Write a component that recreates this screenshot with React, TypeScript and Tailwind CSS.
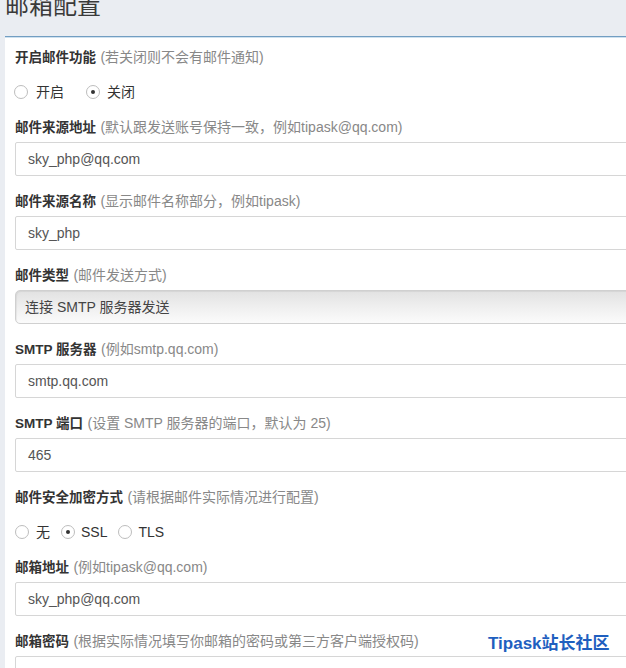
import React from "react";

const font = { fontFamily: '"Liberation Sans", "Noto Sans CJK SC", sans-serif' };

function Label({ title, hint }: { title: string; hint: string }) {
  return (
    <div className="h-[20px] leading-[20px] mb-[5px] whitespace-nowrap text-[#333]">
      <span className="font-bold text-[13.5px]">{title}</span>{" "}
      <span className="text-[14px] text-[#888]">{hint}</span>
    </div>
  );
}

function TextInput({ value }: { value: string }) {
  return (
    <div className="h-[34px] mb-[15px] border border-[#d6d6d6] rounded-[2px] bg-white px-[12px] flex items-center text-[14px] text-[#555]">
      {value}
    </div>
  );
}

function Radio({ label, checked, className }: { label: string; checked?: boolean; className?: string }) {
  return (
    <label className={`flex items-center ${className ?? ""}`}>
      <span className="w-[14px] h-[14px] rounded-full border border-[#bdbdbd] bg-white flex items-center justify-center">
        {checked && <span className="w-[4px] h-[4px] rounded-full bg-[#333]" />}
      </span>
      <span className="text-[14px] text-[#333]">{label}</span>
    </label>
  );
}

export default function App() {
  return (
    <div className="relative w-[626px] h-[668px] overflow-hidden bg-[#eaedf2]" style={font}>
      <div className="h-[36px] flex flex-col">
        <h1 className="text-[24px] leading-[24px] font-normal text-[#3a3a3a] pl-[5px] -mt-[6px]">邮箱配置</h1>
      </div>

      <div className="ml-[5px] w-[700px] bg-white border-t border-[#729ec2] h-full">
        <div className="h-px bg-[#cfe1ef]" />
        <div className="pt-[9px] pl-[10px]">
          <Label title="开启邮件功能" hint="(若关闭则不会有邮件通知)" />
          <div className="flex items-center h-[20px] mt-[15px] mb-[15px] -ml-[1px]">
            <Radio label="开启" className="gap-[8px]" />
            <Radio label="关闭" checked className="gap-[7px] ml-[22px]" />
          </div>

          <Label title="邮件来源地址" hint="(默认跟发送账号保持一致，例如tipask@qq.com)" />
          <TextInput value="sky_php@qq.com" />

          <Label title="邮件来源名称" hint="(显示邮件名称部分，例如tipask)" />
          <TextInput value="sky_php" />

          <Label title="邮件类型" hint="(邮件发送方式)" />
          <div className="h-[34px] mb-[15px] border border-[#d0d0d0] rounded-l-[5px] bg-gradient-to-b from-[#e2e2e2] via-[#efefef] to-[#fbfbfb] pl-[9px] flex items-center text-[14px] text-[#444] shadow-[inset_1px_1px_1px_rgba(0,0,0,0.06)]">
            连接 SMTP 服务器发送
          </div>

          <Label title="SMTP 服务器" hint="(例如smtp.qq.com)" />
          <TextInput value="smtp.qq.com" />

          <Label title="SMTP 端口" hint="(设置 SMTP 服务器的端口，默认为 25)" />
          <TextInput value="465" />

          <Label title="邮件安全加密方式" hint="(请根据邮件实际情况进行配置)" />
          <div className="flex items-center h-[20px] mt-[15px] mb-[15px]">
            <Radio label="无" className="gap-[7px]" />
            <Radio label="SSL" checked className="gap-[6px] ml-[11px]" />
            <Radio label="TLS" className="gap-[6px] ml-[11px]" />
          </div>

          <Label title="邮箱地址" hint="(例如tipask@qq.com)" />
          <TextInput value="sky_php@qq.com" />

          <Label title="邮箱密码" hint="(根据实际情况填写你邮箱的密码或第三方客户端授权码)" />
          <TextInput value="" />
        </div>
      </div>

      <div className="absolute left-[488px] top-[633px] text-[17px] leading-[22px] font-bold text-[#1f5fbf] whitespace-nowrap">
        Tipask站长社区
      </div>
    </div>
  );
}
